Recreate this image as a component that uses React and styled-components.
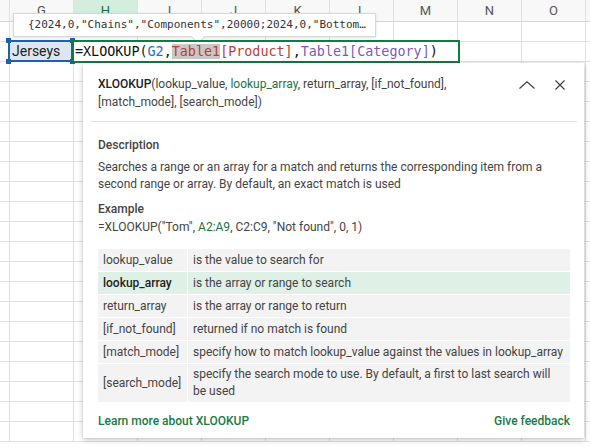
import React from "react";
import styled, { createGlobalStyle } from "styled-components";

const GlobalStyle = createGlobalStyle`
  html, body { margin: 0; padding: 0; background: #fff; }
  body {
    font-family: Roboto, "Liberation Sans", sans-serif;
    color: #333;
    overflow: hidden;
  }
  #root { width: 590px; height: 448px; position: relative; overflow: hidden; }
`;

const columns = [
  { name: "F", width: 10 },
  { name: "G", width: 64 },
  { name: "H", width: 64, active: true },
  { name: "I", width: 64 },
  { name: "J", width: 64 },
  { name: "K", width: 64 },
  { name: "L", width: 64 },
  { name: "M", width: 64 },
  { name: "N", width: 64 },
  { name: "O", width: 64 },
  { name: "P", width: 64 },
];

const ROW_COUNT = 21;

const args = [
  { name: "lookup_value", text: "is the value to search for" },
  { name: "lookup_array", text: "is the array or range to search", current: true },
  { name: "return_array", text: "is the array or range to return" },
  { name: "[if_not_found]", text: "returned if no match is found" },
  {
    name: "[match_mode]",
    text: "specify how to match lookup_value against the values in lookup_array",
  },
  {
    name: "[search_mode]",
    text: "specify the search mode to use. By default, a first to last search will be used",
  },
];

function App() {
  return (
    <Page>
      <GlobalStyle />
      <Sheet>
        <HeaderRow>
          {columns.map((col) => (
            <HeadCell key={col.name} $w={col.width} $active={col.active}>
              {col.name !== "F" && col.name !== "P" ? col.name : ""}
            </HeadCell>
          ))}
        </HeaderRow>
        {Array.from({ length: ROW_COUNT }).map((_, r) => (
          <Row key={r}>
            {columns.map((col) => (
              <Cell key={col.name} $w={col.width} />
            ))}
          </Row>
        ))}
      </Sheet>

      <ValueTip>
        {'{2024,0,"Chains","Components",20000;2024,0,"Bottom…'}
      </ValueTip>

      <SelectedCell>
        Jerseys
        <Handle $x="left" $y="top" />
        <Handle $x="right" $y="top" />
        <Handle $x="left" $y="bottom" />
        <Handle $x="right" $y="bottom" />
      </SelectedCell>

      <Editor>
        =XLOOKUP(<Ref $c="#2a6ebb">G2</Ref>,
        <Ref $c="#b3423a" $hl>Table1</Ref>
        <Ref $c="#b3423a">[Product]</Ref>,
        <Ref $c="#7d5ab5">Table1[Category]</Ref>)
      </Editor>

      <Card>
        <CardHeader>
          <Signature>
            <FnName>XLOOKUP</FnName>(lookup_value, <Current>lookup_array</Current>,
            return_array, [if_not_found], [match_mode], [search_mode])
          </Signature>
          <IconButtons>
            <IconButton aria-label="collapse">
              <svg width="16" height="8" viewBox="0 0 16 8">
                <path d="M0.5 7.5 L8 0.8 L15.5 7.5" fill="none" stroke="#3b3b3b" strokeWidth="1.1" />
              </svg>
            </IconButton>
            <IconButton aria-label="close">
              <svg width="10" height="10" viewBox="0 0 10 10">
                <path d="M0.5 0.5 L9.5 9.5 M9.5 0.5 L0.5 9.5" fill="none" stroke="#3b3b3b" strokeWidth="1.1" />
              </svg>
            </IconButton>
          </IconButtons>
        </CardHeader>
        <Divider />

        <Label $gap={15}>Description</Label>
        <Body $gap={5}>
          Searches a range or an array for a match and returns the corresponding item from a
          second range or array. By default, an exact match is used
        </Body>

        <Label $gap={8}>Example</Label>
        <Body $gap={1}>
          =XLOOKUP("Tom", <Current>A2:A9</Current>, C2:C9, "Not found", 0, 1)
        </Body>

        <ArgTable>
          {args.map((a) => (
            <React.Fragment key={a.name}>
              <ArgCell $current={a.current} $name>
                {a.name}
              </ArgCell>
              <ArgCell $current={a.current}>{a.text}</ArgCell>
            </React.Fragment>
          ))}
        </ArgTable>

        <Footer>
          <Link>Learn more about XLOOKUP</Link>
          <Link>Give feedback</Link>
        </Footer>
      </Card>
    </Page>
  );
}

const Page = styled.div`
  position: relative;
  width: 590px;
  height: 448px;
  overflow: hidden;
  background: #fff;
`;

const Sheet = styled.div`
  display: flex;
  flex-direction: column;
`;

const HeaderRow = styled.div`
  display: flex;
  height: 22px;
  background: #f8f8f8;
  border-bottom: 1px solid #d6d6d6;
  box-sizing: border-box;
`;

const HeadCell = styled.div`
  flex: 0 0 ${(p) => p.$w}px;
  box-sizing: border-box;
  border-right: 1px solid #e1e1e1;
  display: flex;
  align-items: center;
  justify-content: center;
  font-size: 13px;
  color: ${(p) => (p.$active ? "#1d6b3e" : "#555")};
  background: ${(p) => (p.$active ? "#d3eedc" : "transparent")};
  box-shadow: ${(p) => (p.$active ? "inset 0 -2px 0 #107c41" : "none")};
`;

const Row = styled.div`
  display: flex;
  height: 20px;
  border-bottom: 1px solid #e1e1e1;
  box-sizing: border-box;
`;

const Cell = styled.div`
  flex: 0 0 ${(p) => p.$w}px;
  box-sizing: border-box;
  border-right: 1px solid #e1e1e1;
`;

const ValueTip = styled.div`
  position: absolute;
  left: 13px;
  top: 13px;
  width: 363px;
  height: 24px;
  box-sizing: border-box;
  padding-left: 14px;
  background: #fff;
  border: 1px solid #d8d8d8;
  box-shadow: 0 1px 3px rgba(0, 0, 0, 0.12);
  font-family: "DejaVu Sans Mono", "Liberation Mono", monospace;
  font-size: 11px;
  line-height: 22px;
  color: #333;
  white-space: nowrap;

  &::after {
    content: "";
    position: absolute;
    left: 179px;
    bottom: -6px;
    width: 9px;
    height: 9px;
    background: #fff;
    border-right: 1px solid #d8d8d8;
    border-bottom: 1px solid #d8d8d8;
    transform: rotate(45deg);
  }
`;

const SelectedCell = styled.div`
  position: absolute;
  left: 8px;
  top: 40px;
  width: 65px;
  height: 22px;
  box-sizing: border-box;
  border: 2px solid #1e5fae;
  background: #dde7f3;
  padding-left: 2px;
  font-size: 14px;
  line-height: 18px;
  color: #222;
`;

const Handle = styled.span`
  position: absolute;
  width: 5px;
  height: 5px;
  background: #1e5fae;
  ${(p) => (p.$x === "left" ? "left: -4px;" : "right: -4px;")}
  ${(p) => (p.$y === "top" ? "top: -4px;" : "bottom: -4px;")}
`;

const Editor = styled.div`
  position: absolute;
  left: 72px;
  top: 40px;
  width: 388px;
  height: 23px;
  box-sizing: border-box;
  border: 2px solid #107c41;
  background: #fff;
  padding-left: 1px;
  font-family: "DejaVu Sans Mono", "Liberation Mono", monospace;
  font-size: 13.4px;
  line-height: 19px;
  color: #111;
  white-space: nowrap;
`;

const Ref = styled.span`
  color: ${(p) => p.$c};
  background: ${(p) => (p.$hl ? "#c9c6c4" : "transparent")};
`;

const Card = styled.div`
  position: absolute;
  left: 83px;
  top: 63px;
  width: 501px;
  height: 375px;
  box-sizing: border-box;
  padding: 12px 14px 0 15px;
  background: #fff;
  box-shadow: 0 2px 6px rgba(0, 0, 0, 0.22), 0 0 1px rgba(0, 0, 0, 0.25);
  display: flex;
  flex-direction: column;
  font-size: 12px;
  line-height: 17px;
  color: #333;
`;

const CardHeader = styled.div`
  display: flex;
  align-items: flex-start;
  gap: 12px;
`;

const Signature = styled.div`
  flex: 1;
  max-width: 400px;
  line-height: 18px;
  color: #444;
`;

const FnName = styled.span`
  color: #222;
  font-weight: 500;
`;

const Current = styled.span`
  color: #217346;
`;

const IconButtons = styled.div`
  margin-left: auto;
  display: flex;
  align-items: center;
  gap: 20px;
  padding-top: 5px;
  padding-right: 5px;
`;

const IconButton = styled.span`
  display: flex;
  align-items: center;
  justify-content: center;
`;

const Divider = styled.div`
  height: 1px;
  background: #e0e0e0;
  margin: 10px -7px 0 -7px;
`;

const Label = styled.div`
  margin-top: ${(p) => p.$gap}px;
  font-weight: 500;
  color: #444;
`;

const Body = styled.div`
  margin-top: ${(p) => p.$gap}px;
  color: #444;
`;

const ArgTable = styled.div`
  margin-top: 13px;
  display: grid;
  grid-template-columns: 89px 1fr;
  gap: 1px;
`;

const ArgCell = styled.div`
  min-height: 22px;
  box-sizing: border-box;
  padding: 2px 6px 2px 5px;
  display: flex;
  align-items: center;
  background: ${(p) => (p.$current ? "#dff0e6" : "#f3f3f3")};
  color: ${(p) => (p.$current && p.$name ? "#222" : "#444")};
  font-weight: ${(p) => (p.$current && p.$name ? 500 : 400)};
`;

const Footer = styled.div`
  margin-top: 11px;
  display: flex;
  justify-content: space-between;
`;

const Link = styled.span`
  color: #1a7a45;
  font-weight: 500;
`;

export default App;
